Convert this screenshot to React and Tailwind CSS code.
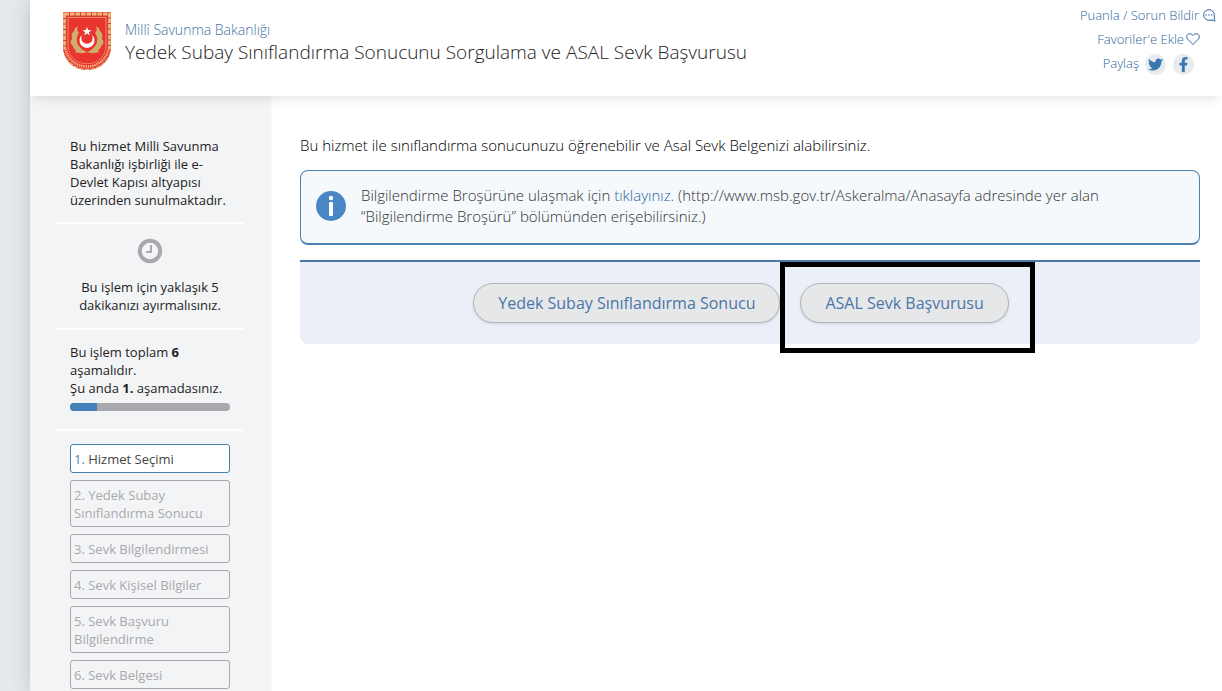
import React from 'react';
import { FaTwitter, FaFacebookF } from 'react-icons/fa';

const steps = [
  { id: 1, title: 'Hizmet Seçimi' },
  { id: 2, title: 'Yedek Subay Sınıflandırma Sonucu' },
  { id: 3, title: 'Sevk Bilgilendirmesi' },
  { id: 4, title: 'Sevk Kişisel Bilgiler' },
  { id: 5, title: 'Sevk Başvuru Bilgilendirme' },
  { id: 6, title: 'Sevk Belgesi' },
];

const currentStep = 1;

const Crest = () => (
  <svg width="50" height="60" viewBox="0 0 50 60" aria-hidden="true">
    <path d="M1 1h48v34c0 14-10 24-24 24S1 49 1 35z" fill="#dc3a34" />
    <path d="M2.500 3h45v32c0 13-9.500 22.500-22.500 22.500S2.500 48 2.500 35z" fill="none" stroke="#ecb878" strokeWidth="2.800" strokeDasharray="4.500 1" />
    <path d="M6 6.500h38V35c0 10-8 18-19 18S6 45 6 35z" fill="#e9342f" stroke="#f2b98a" strokeWidth="0.700" />
    {/* laurel branches */}
    <g fill="#cfae6c">
      <path d="M16 15c-1 3-1 5 1 7-3 3-3 10 0 13 2 3 5 5 8 6-4 2-9 1-12 0 0-1 1-1 1-2-2-1-3-2-3-4-2-1-3-4-2-6 1 0 1-1 1-2-1-3 0-5 2-7 0-2 2-4 4-5z" />
      <path d="M34 15c1 3 1 5-1 7 3 3 3 10 0 13-2 3-5 5-8 6 4 2 9 1 12 0 0-1-1-1-1-2 2-1 3-2 3-4 2-1 3-4 2-6-1 0-1-1-1-2 1-3 0-5-2-7 0-2-2-4-4-5z" />
    </g>
    <path d="M20.500 23.500a7.500 7.500 0 1 0 9 0a5.700 5.700 0 1 1-9 0z" fill="#fff" />
    <path d="M25 16l1.200 3 3.200.2-2.500 2 .9 3.100-2.800-1.700-2.800 1.700.9-3.100-2.500-2 3.200-.2z" fill="#fff" />
    <path d="M3.500 38c2 10.500 11 17.500 21.500 17.500S44.500 48.500 46.500 38" fill="none" stroke="#e9342f" strokeWidth="4.500" />
    <path d="M3.500 38c2 10.500 11 17.500 21.500 17.500S44.500 48.500 46.500 38" fill="none" stroke="#f0c08c" strokeWidth="2.400" strokeDasharray="1.300 .9" />
  </svg>
);

const CommentIcon = () => (
  <svg width="14" height="14" viewBox="0 0 14 14" fill="none" stroke="currentColor" strokeLinecap="round" strokeLinejoin="round" aria-hidden="true">
    <path d="M10 12.200H6A5.300 5.300 0 1 1 12.300 7v4.200c0 .8.300 1.300 1 1.500-1.300.3-2.400 0-3.300-.5z" />
    <path d="M4 6.900h.1M6.800 6.900h.1M9.600 6.900h.1" strokeWidth="1.400" />
  </svg>
);

const HeartIcon = () => (
  <svg width="14" height="14" viewBox="0 0 14 14" fill="none" stroke="currentColor" strokeLinejoin="round" aria-hidden="true">
    <path d="M7 12.500L1.800 7.300C.3 5.800.4 3.500 1.800 2.400 3.300 1.200 5.700 1.400 7 3.600c1.300-2.200 3.700-2.400 5.200-1.200 1.400 1.100 1.500 3.400 0 4.900z" />
  </svg>
);

const ClockIcon = () => (
  <svg width="26" height="26" viewBox="0 0 26 26" fill="none" stroke="#a7a9ac" aria-hidden="true">
    <circle cx="13" cy="13" r="10.200" strokeWidth="4" />
    <path d="M14 7v7H9" strokeWidth="2" />
  </svg>
);

const InfoIcon = () => (
  <svg width="30" height="30" viewBox="0 0 30 30" className="shrink-0" aria-hidden="true">
    <circle cx="15" cy="15" r="15" fill="#4a86c5" />
    <circle cx="15" cy="7" r="2.200" fill="#fff" />
    <rect x="13" y="11" width="4" height="14" rx="1" fill="#fff" />
  </svg>
);

const ActionButton = ({ children }) => (
  <button type="button" className="h-10 px-6 rounded-full border border-[#b3b5b7] bg-[#e6e7e8] text-base text-[#4a76a8] shadow-sm hover:bg-gray-200">
    {children}
  </button>
);

const Header = () => (
  <header className="relative flex items-start justify-between bg-white pl-8 pt-[11px] h-24 shadow-[0_6px_10px_-4px_rgba(0,0,0,0.12)]">
    <div className="flex gap-[13px]">
      <Crest />
      <div className="pt-2">
        <a href="#kurum" className="block text-sm leading-[22px] font-light text-[#4474a5]">Millî Savunma Bakanlığı</a>
        <h1 className="text-[19px] leading-[22px] font-light text-[#222]">
          Yedek Subay Sınıflandırma Sonucunu Sorgulama ve ASAL Sevk Başvurusu
        </h1>
      </div>
    </div>
    <div className="flex flex-col items-end text-[13px] font-light leading-6 text-[#2f659c] -mt-2 pr-[6px]">
      <a href="#bildir" className="flex items-center gap-[3px]">Puanla / Sorun Bildir<CommentIcon /></a>
      <a href="#favori" className="flex items-center gap-[2px] mr-4">Favoriler'e Ekle<HeartIcon /></a>
      <div className="flex mr-[22px]">
        <span className="mr-[6px]">Paylaş</span>
        <a href="#twitter" aria-label="Twitter" className="flex items-center justify-center size-[21px] mt-[3px] mr-[7px] rounded-full bg-[#e8ebee] text-[#3a77b0]">
          <FaTwitter size={15} />
        </a>
        <a href="#facebook" aria-label="Facebook" className="flex items-center justify-center size-[21px] mt-[3px] rounded-full bg-[#e8ebee] text-[#3a77b0]">
          <FaFacebookF size={15} />
        </a>
      </div>
    </div>
  </header>
);

const SideBar = () => (
  <aside className="w-60 shrink-0 bg-[#f3f4f6] px-[27px] pt-[41px] text-[13px] leading-[18px] text-[#222]">
    <p className="px-[13px] pb-[13px]">
      Bu hizmet Milli Savunma Bakanlığı işbirliği ile e-Devlet Kapısı altyapısı üzerinden sunulmaktadır.
    </p>
    <div className="flex flex-col items-center border-t-2 border-white px-[13px] pt-[14px] pb-[14px] text-center">
      <ClockIcon />
      <p className="mt-[14px]">Bu işlem için yaklaşık 5 dakikanızı ayırmalısınız.</p>
    </div>
    <div className="border-t-2 border-white px-[13px] pt-[13px] pb-[18px]">
      <p>
        Bu işlem toplam <b>{steps.length}</b><br />aşamalıdır.<br />
        Şu anda <b>{currentStep}.</b> aşamadasınız.
      </p>
      <div className="mt-[6px] h-2 rounded-full bg-[#a7a9ac] overflow-hidden">
        <div className="h-full bg-[#4580b8]" style={{ width: `${(currentStep / steps.length) * 100}%` }}></div>
      </div>
    </div>
    <ol className="flex flex-col gap-[7px] border-t-2 border-white px-[13px] pt-[13px]">
      {steps.map((step) => (
        step.id === currentStep ? (
          <li key={step.id} className="rounded-[3px] border border-[#4580a8] bg-white pl-[3px] pr-2 pt-[5px] pb-1 text-[#444]">
            <span className="text-[#5c80a8]">{step.id}.</span> {step.title}
          </li>
        ) : (
          <li key={step.id} className="rounded-[3px] border border-[#a7a9ac] pl-[3px] pr-2 pt-[5px] pb-1 text-[#a7a9ac]">
            {`${step.id}. ${step.title}`}
          </li>
        )
      ))}
    </ol>
  </aside>
);

const App = () => {
  return (
    <div className="min-h-screen bg-[#e5e9ec] pl-[30px] font-['Open_Sans','Noto_Sans',sans-serif]">
      <div className="flex flex-col min-h-screen bg-white shadow-[0_0_20px_rgba(0,0,0,0.16)]">
        <Header />
        <div className="flex flex-1">
          <SideBar />
          <main className="flex-1 pl-[30px] pr-[22px] pt-[38px] shadow-[inset_5px_0_5px_-5px_rgba(0,0,0,0.06)]">
            <p className="text-[15px] leading-[22px] font-light text-black">
              Bu hizmet ile sınıflandırma sonucunuzu öğrenebilir ve Asal Sevk Belgenizi alabilirsiniz.
            </p>
            <div className="flex items-center gap-[15px] mt-[14px] pl-[15px] pr-20 pt-[14px] pb-4 rounded-lg border border-b-2 border-[#4f81b0] bg-[#f5f9fc]">
              <InfoIcon />
              <p className="text-[15px] leading-[21px] font-light text-[#333]">
                Bilgilendirme Broşürüne ulaşmak için <a href="#brosur" className="text-[#2f659c]">tıklayınız.</a> (http://www.msb.gov.tr/Askeralma/Anasayfa adresinde yer alan “Bilgilendirme Broşürü” bölümünden erişebilirsiniz.)
              </p>
            </div>
            <div className="flex justify-center gap-5 mt-[15px] pt-[21px] pb-[21px] pr-[18px] rounded-b-lg border-t-2 border-[#4a7aac] bg-[#ebf0f8]">
              <ActionButton>Yedek Subay Sınıflandırma Sonucu</ActionButton>
              <div className="relative">
                <ActionButton>ASAL Sevk Başvurusu</ActionButton>
                <div className="absolute -left-5 -right-[26px] -top-[21px] -bottom-[30px] border-[5px] border-black pointer-events-none"></div>
              </div>
            </div>
          </main>
        </div>
      </div>
    </div>
  );
};

export default App;
